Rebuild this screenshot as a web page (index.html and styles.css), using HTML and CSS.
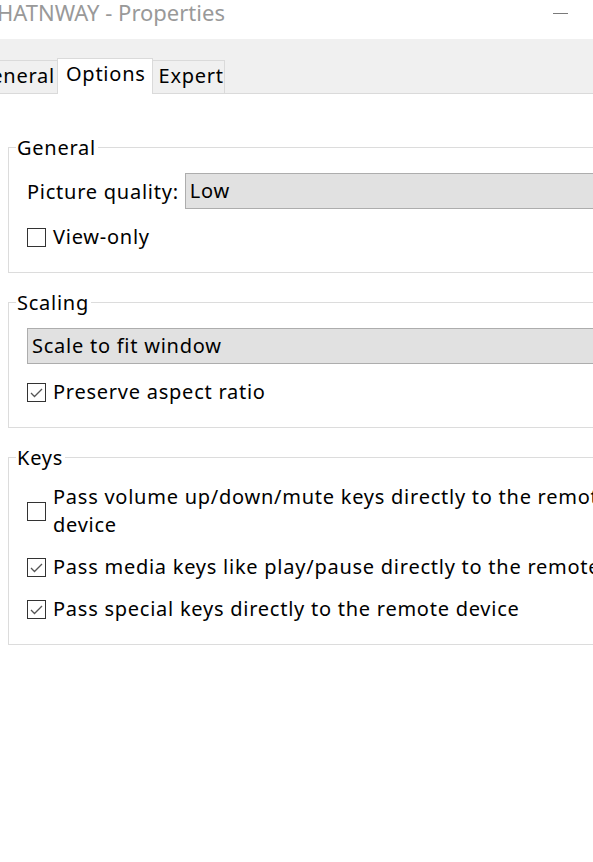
FILE: index.html
```html
<!DOCTYPE html>
<html lang="en">
<head>
<meta charset="utf-8">
<title>Properties</title>
<link rel="stylesheet" href="styles.css">
</head>
<body>
<div class="window">
  <div class="titlebar">
    <span class="title">HATNWAY - Properties</span>
    <span class="minimize"></span>
  </div>
  <div class="tabstrip">
    <div class="tab tab-first">General</div>
    <div class="tab tab-active">Options</div>
    <div class="tab tab-last">Expert</div>
  </div>
  <div class="pane">
    <fieldset class="group">
      <legend>General</legend>
      <div class="row">
        <span class="label">Picture quality:</span>
        <div class="combo combo-inline">Low</div>
      </div>
      <label class="check">
        <span class="box"></span>
        <span class="text">View-only</span>
      </label>
    </fieldset>

    <fieldset class="group">
      <legend>Scaling</legend>
      <div class="combo">Scale to fit window</div>
      <label class="check">
        <span class="box"><svg viewBox="0 0 19 19" width="19" height="19"><path d="M4 10 L7.5 13.5 L15 6" fill="none" stroke="#555" stroke-width="1.3"/></svg></span>
        <span class="text">Preserve aspect ratio</span>
      </label>
    </fieldset>

    <fieldset class="group">
      <legend>Keys</legend>
      <label class="check check-first">
        <span class="box"></span>
        <span class="text">Pass volume up/down/mute keys directly to the remote<br>device</span>
      </label>
      <label class="check">
        <span class="box"><svg viewBox="0 0 19 19" width="19" height="19"><path d="M4 10 L7.5 13.5 L15 6" fill="none" stroke="#555" stroke-width="1.3"/></svg></span>
        <span class="text">Pass media keys like play/pause directly to the remote device</span>
      </label>
      <label class="check">
        <span class="box"><svg viewBox="0 0 19 19" width="19" height="19"><path d="M4 10 L7.5 13.5 L15 6" fill="none" stroke="#555" stroke-width="1.3"/></svg></span>
        <span class="text">Pass special keys directly to the remote device</span>
      </label>
    </fieldset>
  </div>
</div>
</body>
</html>
```

FILE: styles.css
```css
html, body {
  margin: 0;
  padding: 0;
  background: #ffffff;
}

body {
  width: 593px;
  height: 862px;
  overflow: hidden;
  font-family: "Noto Sans", "Open Sans", sans-serif;
  font-size: 20px;
  letter-spacing: 0.75px;
  color: #000000;
}

.window {
  width: 800px;
}

.titlebar {
  height: 39px;
  background: #ffffff;
  display: flex;
  align-items: flex-start;
  position: relative;
}

.title {
  margin-left: -3px;
  margin-top: -3px;
  font-size: 22px;
  letter-spacing: 0;
  color: #999999;
  line-height: 30px;
  white-space: nowrap;
}

.minimize {
  position: absolute;
  left: 553px;
  top: 13px;
  width: 15px;
  height: 1px;
  background: #7a7a7a;
}

.tabstrip {
  height: 54px;
  background: #f0f0f0;
  border-bottom: 1px solid #dadada;
  display: flex;
  align-items: flex-end;
}

.tab {
  box-sizing: border-box;
  height: 33px;
  line-height: 30px;
  border: 1px solid #dadada;
  border-bottom: none;
  background: #f0f0f0;
  white-space: nowrap;
}

.tab-first {
  margin-left: -30px;
  padding: 0 2px 0 5px;
}

.tab-active {
  position: relative;
  z-index: 1;
  height: 36px;
  margin: 0 -1px -1px -1px;
  padding: 0 6px 0 8px;
  background: #ffffff;
}

.tab-last {
  padding: 0 0 0 6px;
}

.pane {
  padding-top: 40px;
}

.group {
  margin: 0 0 16px 8px;
  padding: 12px 0 21px 18px;
  border: 1px solid #dcdcdc;
  min-width: 0;
  width: 780px;
  box-sizing: border-box;
}

.group legend {
  padding: 0 2px 0 1px;
  margin-left: -11px;
  line-height: 27px;
}

.row {
  display: flex;
  align-items: center;
}

.label {
  white-space: nowrap;
  margin-right: 6px;
}

.combo {
  height: 36px;
  box-sizing: border-box;
  border: 1px solid #adadad;
  background: #e1e1e1;
  padding-left: 4px;
  line-height: 33px;
  white-space: nowrap;
}

.combo-inline {
  flex: 1;
}

.check {
  display: flex;
  align-items: center;
  margin-top: 14px;
  line-height: 28px;
  white-space: nowrap;
}

.check-first {
  margin-top: 0;
}

.box {
  flex: none;
  width: 19px;
  height: 19px;
  box-sizing: border-box;
  border: 1px solid #333333;
  background: #ffffff;
  margin-right: 7px;
  position: relative;
}

.box svg {
  position: absolute;
  left: -1px;
  top: -1px;
}
```
